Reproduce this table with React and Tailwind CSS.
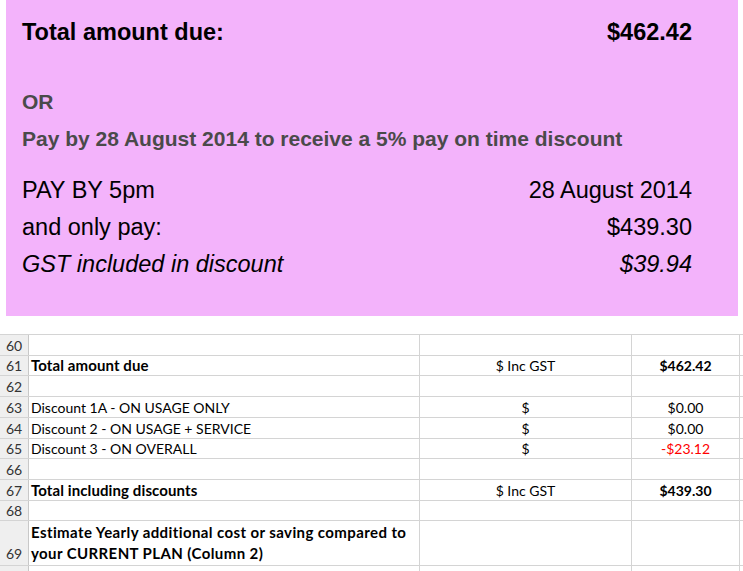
const rows = [
  { n: '60', h: 'h-[21px]' },
  { n: '61', h: 'h-[20px]', a: 'Total amount due', b: '$ Inc GST', c: '$462.42', bold: true },
  { n: '62', h: 'h-[21px]' },
  { n: '63', h: 'h-[21px]', a: 'Discount 1A - ON USAGE ONLY', b: '$', c: '$0.00' },
  { n: '64', h: 'h-[21px]', a: 'Discount 2 - ON USAGE + SERVICE', b: '$', c: '$0.00' },
  { n: '65', h: 'h-[20px]', a: 'Discount 3 - ON OVERALL', b: '$', c: '-$23.12', red: true },
  { n: '66', h: 'h-[21px]' },
  { n: '67', h: 'h-[21px]', a: 'Total including discounts', b: '$ Inc GST', c: '$439.30', bold: true },
  { n: '68', h: 'h-[20px]' },
  { n: '69', h: 'h-[45px]', a: 'Estimate Yearly additional cost or saving compared to your CURRENT PLAN (Column 2)', bold: true, tall: true },
  { n: '', h: 'h-[21px]' },
];

function SheetRow({ row }) {
  const align = row.tall ? 'items-end pb-[1px]' : 'items-center';
  const labelFont = row.bold ? (row.tall ? 'font-bold text-[15px] tracking-[0.4px]' : 'font-bold text-[15px] tracking-[0.1px]') : '';
  return (
    <div className={`flex ${row.h} border-b border-[#d4d4d4]`}>
      <div className={`w-[29px] shrink-0 flex ${align} justify-center bg-[#efefef] border-r border-[#c8c8c8] text-[#333]`}>
        {row.n}
      </div>
      <div className={`w-[391px] shrink-0 flex ${align} pl-[2px] border-r border-[#d4d4d4] leading-[21px] ${labelFont}`}>
        {row.a}
      </div>
      <div className={`w-[212px] shrink-0 flex ${align} justify-center border-r border-[#d4d4d4]`}>
        {row.b}
      </div>
      <div className={`w-[108px] shrink-0 flex ${align} justify-center border-r border-[#d4d4d4] ${row.bold ? 'font-bold' : ''} ${row.red ? 'text-[#ff0000]' : ''}`}>
        {row.c}
      </div>
    </div>
  );
}

export default function App() {
  return (
    <div className="w-[743px] h-[571px] overflow-hidden bg-white">
      {/* pink summary box */}
      <div className="ml-[6px] w-[732px] h-[316px] bg-[#f3b3fb] pl-[16px] pr-[46px] pt-[15px] font-['Liberation_Sans',Arial,sans-serif] text-black">
        <div className="flex justify-between h-[36px] items-center text-[23.5px] font-bold">
          <span>Total amount due:</span>
          <span>$462.42</span>
        </div>
        <div className="mt-[32px] h-[37px] flex items-center text-[21px] font-bold text-[#4a4a4a]">OR</div>
        <div className="h-[37px] flex items-center text-[21px] font-bold text-[#4a4a4a]">
          Pay by 28 August 2014 to receive a 5% pay on time discount
        </div>
        <div className="mt-[15px] flex flex-col text-[23.5px]">
          <div className="flex justify-between h-[37px] items-center">
            <span>PAY BY 5pm</span>
            <span>28 August 2014</span>
          </div>
          <div className="flex justify-between h-[37px] items-center">
            <span>and only pay:</span>
            <span>$439.30</span>
          </div>
          <div className="flex justify-between h-[37px] items-center italic">
            <span>GST included in discount</span>
            <span>$39.94</span>
          </div>
        </div>
      </div>

      {/* spreadsheet excerpt */}
      <div className="mt-[18px] border-t border-[#d4d4d4] font-['Lato',sans-serif] text-[14px] text-black">
        {rows.map((r, i) => (
          <SheetRow key={i} row={r} />
        ))}
      </div>
    </div>
  );
}
